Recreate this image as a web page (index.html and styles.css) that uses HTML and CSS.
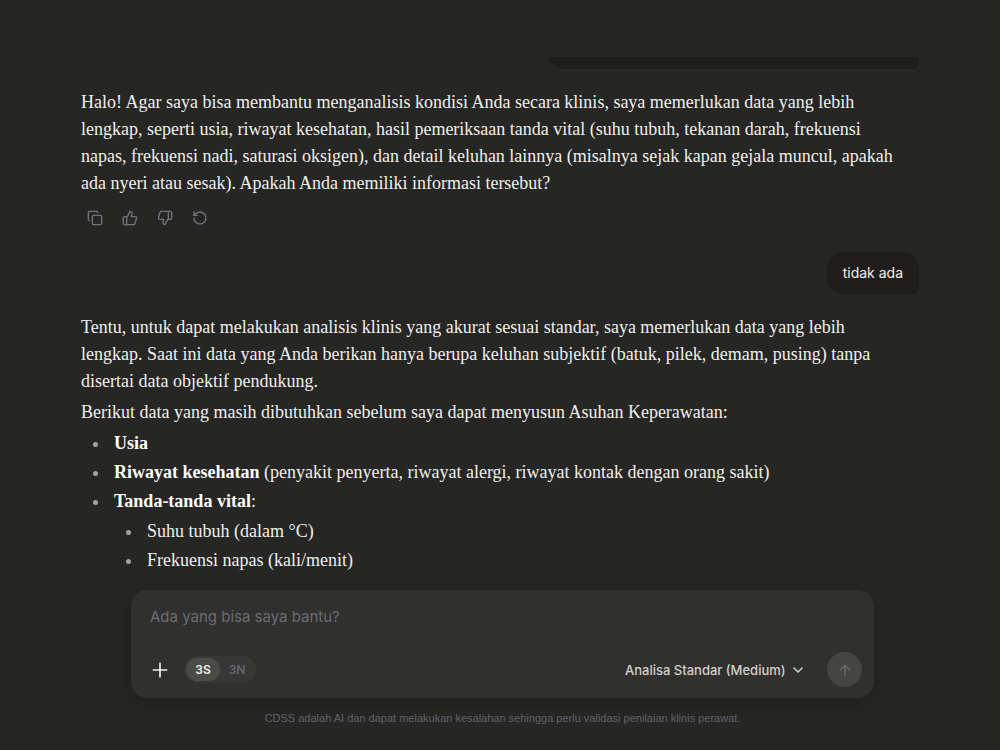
FILE: index.html
```
<!DOCTYPE html>
<html lang="id">
<head>
  <meta charset="UTF-8">
  <meta name="viewport" content="width=device-width, initial-scale=1.0">
  <title>CDSS</title>
  <link rel="stylesheet" href="styles.css">
</head>
<body>

  <main class="chat">
    <div class="thread">
      <div class="bubble bubble-long"></div>

      <div class="answer">
        <p>Halo! Agar saya bisa membantu menganalisis kondisi Anda secara klinis, saya memerlukan data yang lebih lengkap, seperti usia, riwayat kesehatan, hasil pemeriksaan tanda vital (suhu tubuh, tekanan darah, frekuensi napas, frekuensi nadi, saturasi oksigen), dan detail keluhan lainnya (misalnya sejak kapan gejala muncul, apakah ada nyeri atau sesak). Apakah Anda memiliki informasi tersebut?</p>
      </div>

      <div class="actions">
        <button class="action" type="button" aria-label="Salin">
          <svg viewBox="0 0 24 24"><rect x="8" y="8" width="14" height="14" rx="2"/><path d="M4 16c-1.1 0-2-.9-2-2V4c0-1.1.9-2 2-2h10c1.1 0 2 .9 2 2"/></svg>
        </button>
        <button class="action" type="button" aria-label="Suka">
          <svg viewBox="0 0 24 24"><path d="M7 10v12"/><path d="M15 5.88 14 10h5.83a2 2 0 0 1 1.92 2.56l-2.33 8A2 2 0 0 1 17.5 22H4a2 2 0 0 1-2-2v-8a2 2 0 0 1 2-2h2.76a2 2 0 0 0 1.79-1.11L12 2a3.13 3.13 0 0 1 3 3.88Z"/></svg>
        </button>
        <button class="action" type="button" aria-label="Tidak suka">
          <svg viewBox="0 0 24 24"><path d="M17 14V2"/><path d="M9 18.12 10 14H4.17a2 2 0 0 1-1.92-2.56l2.33-8A2 2 0 0 1 6.5 2H20a2 2 0 0 1 2 2v8a2 2 0 0 1-2 2h-2.76a2 2 0 0 0-1.79 1.11L12 22a3.13 3.13 0 0 1-3-3.88Z"/></svg>
        </button>
        <button class="action" type="button" aria-label="Ulangi">
          <svg viewBox="0 0 24 24"><path d="M3 12a9 9 0 1 0 9-9 9.75 9.75 0 0 0-6.74 2.74L3 8"/><path d="M3 3v5h5"/></svg>
        </button>
      </div>

      <div class="bubble">tidak ada</div>

      <div class="answer">
        <p>Tentu, untuk dapat melakukan analisis klinis yang akurat sesuai standar, saya memerlukan data yang lebih lengkap. Saat ini data yang Anda berikan hanya berupa keluhan subjektif (batuk, pilek, demam, pusing) tanpa disertai data objektif pendukung.</p>
        <p>Berikut data yang masih dibutuhkan sebelum saya dapat menyusun Asuhan Keperawatan:</p>
        <ul>
          <li><strong>Usia</strong></li>
          <li><strong>Riwayat kesehatan</strong> (penyakit penyerta, riwayat alergi, riwayat kontak dengan orang sakit)</li>
          <li><strong>Tanda-tanda vital</strong>:
            <ul>
              <li>Suhu tubuh (dalam °C)</li>
              <li>Frekuensi napas (kali/menit)</li>
            </ul>
          </li>
        </ul>
      </div>
    </div>
  </main>

  <footer class="footer">
    <form class="composer">
      <textarea class="prompt" rows="1" placeholder="Ada yang bisa saya bantu?" aria-label="Pesan"></textarea>
      <div class="toolbar">
        <button class="add" type="button" aria-label="Tambah">
          <svg viewBox="0 0 24 24"><path d="M4 12h16M12 4v16"/></svg>
        </button>
        <div class="modes">
          <button class="mode active" type="button">3S</button>
          <button class="mode" type="button">3N</button>
        </div>
        <div class="model">
          <select class="model-select" aria-label="Model">
            <option>Analisa Standar (Medium)</option>
          </select>
          <svg viewBox="0 0 24 24"><path d="m4 8 8 8 8-8"/></svg>
        </div>
        <button class="send" type="submit" aria-label="Kirim">
          <svg viewBox="0 0 24 24"><path d="m5 12 7-7 7 7"/><path d="M12 20V5"/></svg>
        </button>
      </div>
    </form>
    <p class="note">CDSS adalah AI dan dapat melakukan kesalahan sehingga perlu validasi penilaian klinis perawat.</p>
  </footer>

</body>
</html>
```
FILE: styles.css
```
* {
  box-sizing: border-box;
}

body {
  margin: 0;
  height: 100vh;
  padding-top: 57px;
  display: flex;
  flex-direction: column;
  background: #262624;
  color: #f0efec;
  font-family: Inter, sans-serif;
}

button {
  padding: 0;
  border: none;
  background: none;
  color: inherit;
  font-family: inherit;
  cursor: pointer;
}

svg {
  display: block;
  fill: none;
  stroke: currentColor;
  stroke-width: 2;
  stroke-linecap: round;
  stroke-linejoin: round;
}

.chat {
  flex: 1;
  min-height: 0;
  overflow: hidden;
  padding: 0 81px;
}

.thread {
  display: flex;
  flex-direction: column;
  margin-top: -30px;
}

.bubble {
  align-self: flex-end;
  min-height: 42px;
  margin-bottom: 20px;
  padding: 9px 16px;
  border-radius: 16px 16px 6px 16px;
  background: #1f1e1d;
  font-size: 14px;
  line-height: 24px;
}

.bubble-long {
  width: 371px;
}

.answer {
  padding-right: 12px;
  font-family: "Liberation Serif", serif;
  font-size: 18px;
  line-height: 27px;
}

.answer p {
  margin: 0 0 4px;
}

.answer ul {
  margin: 0;
  padding-left: 33px;
  list-style: none;
}

.answer li {
  margin-bottom: 2px;
}

.answer li::before {
  content: "";
  float: left;
  width: 5px;
  height: 5px;
  margin: 12px 0 0 -21px;
  border-radius: 50%;
  background: #a3a29d;
}

.answer li ul {
  margin-top: 3px;
}

.answer strong {
  color: #ffffff;
}

.actions {
  display: flex;
  gap: 7px;
  margin: 3px 0 20px;
}

.action {
  width: 28px;
  height: 28px;
  display: grid;
  place-items: center;
  color: #74737c;
}

.action svg {
  width: 16px;
  height: 16px;
}

.footer {
  padding: 0 126px 24px 131px;
}

.composer {
  padding: 15px 12px 11px 19px;
  border-radius: 16px;
  background: #30302e;
  box-shadow: 0 4px 16px rgba(0, 0, 0, 0.2);
}

.prompt {
  display: block;
  width: 100%;
  height: 24px;
  padding: 0;
  border: none;
  outline: none;
  resize: none;
  background: none;
  color: inherit;
  font: 15px/24px Inter, sans-serif;
}

.prompt::placeholder {
  color: #6c6b73;
}

.toolbar {
  display: flex;
  align-items: center;
  margin-top: 23px;
}

.add svg {
  width: 20px;
  height: 20px;
}

.modes {
  display: flex;
  margin-left: 14px;
  padding: 2px;
  border-radius: 14px;
  background: #373735;
}

.mode {
  width: 34px;
  height: 23px;
  border-radius: 12px;
  color: #6c6b73;
  font-size: 12px;
  font-weight: 500;
}

.mode.active {
  background: #4b4b48;
  color: #f0efec;
  font-weight: 600;
}

.model {
  display: flex;
  align-items: center;
  gap: 6px;
  margin: 0 23px 0 auto;
  color: #d2d1cf;
}

.model-select {
  appearance: none;
  padding: 0;
  border: none;
  background: none;
  color: inherit;
  font: 500 13px/20px Inter, sans-serif;
}

.model svg {
  width: 12px;
  height: 12px;
  stroke-width: 3;
}

.send {
  width: 35px;
  height: 35px;
  display: grid;
  place-items: center;
  border-radius: 50%;
  background: #454543;
  color: #6c6b73;
}

.send svg {
  width: 16px;
  height: 16px;
}

.note {
  margin: 12px 0 0;
  color: #62616a;
  font-family: "Liberation Sans", sans-serif;
  font-size: 11px;
  line-height: 16px;
  text-align: center;
}
```
